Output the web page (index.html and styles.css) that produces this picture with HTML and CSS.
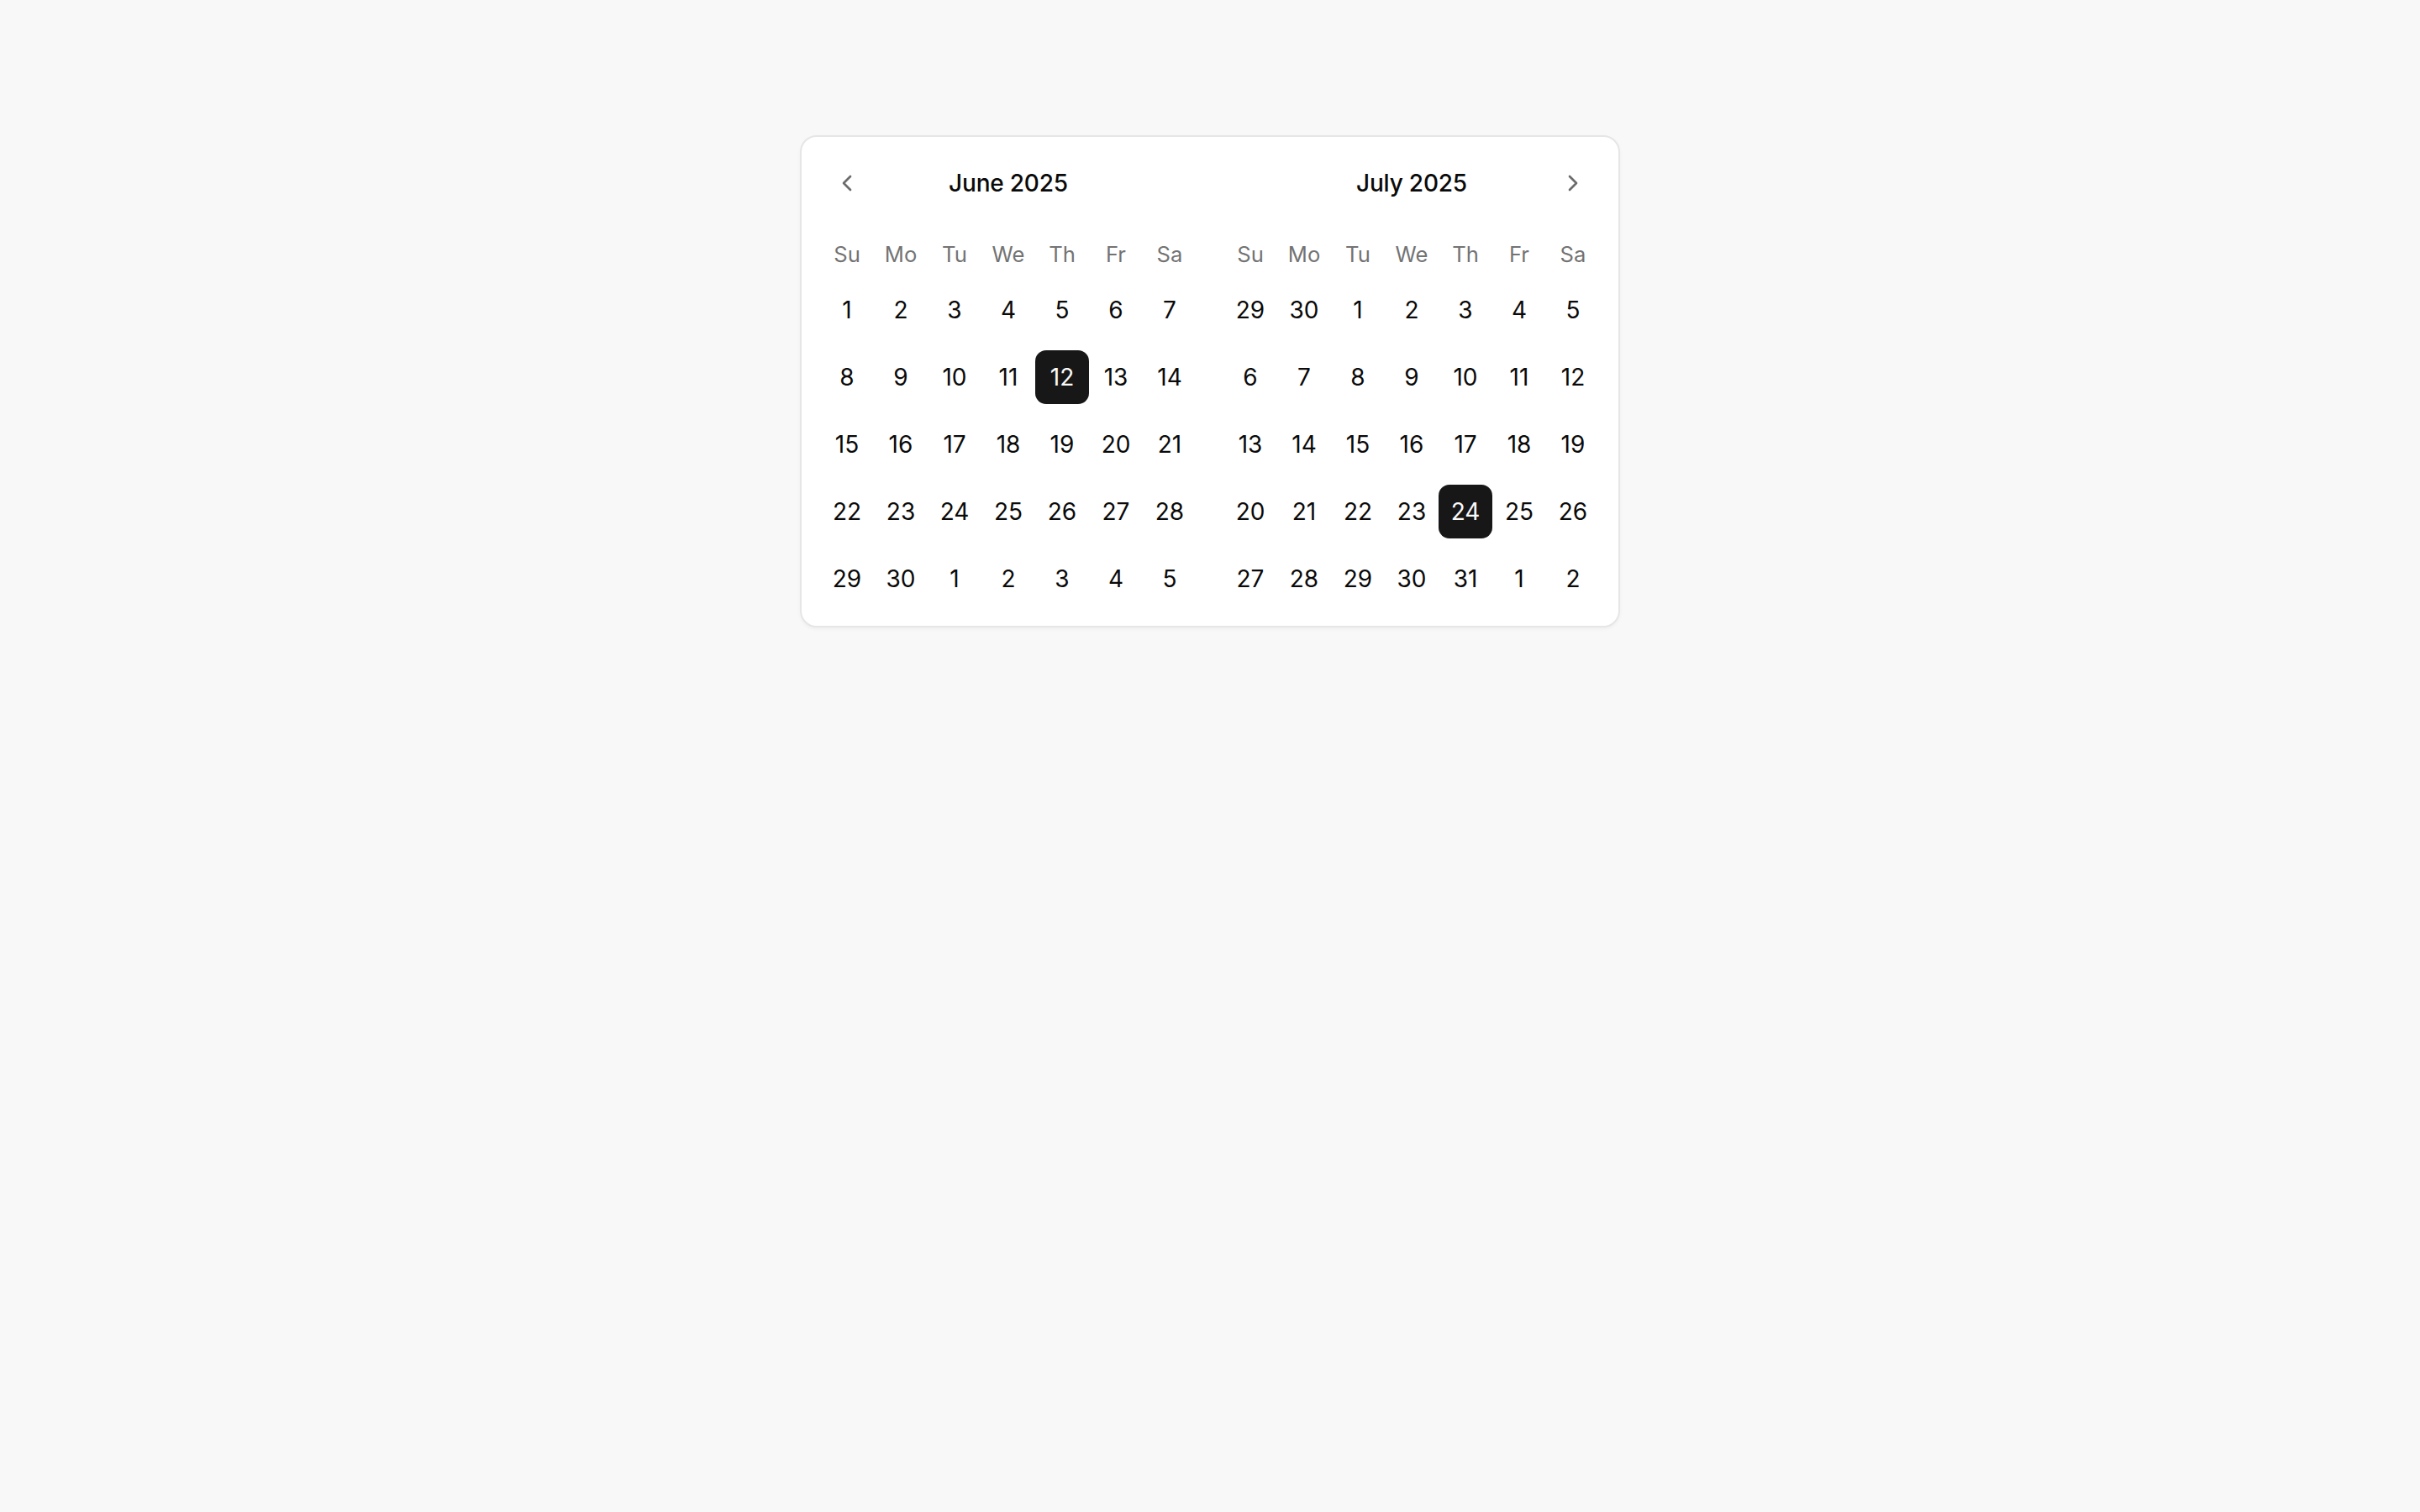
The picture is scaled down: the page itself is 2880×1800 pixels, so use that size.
FILE: index.html
```html
<!DOCTYPE html>
<html lang="en">
<head>
<meta charset="utf-8">
<title>Calendar</title>
<link rel="stylesheet" href="styles.css">
</head>
<body>
<div class="page">
  <div class="calendar">
    <div class="month">
      <div class="caption">
        <button class="nav nav-prev" aria-label="Previous month">
          <svg viewBox="0 0 24 24" width="32" height="32" fill="none" stroke="currentColor" stroke-width="2" stroke-linecap="round" stroke-linejoin="round"><path d="m15 18-6-6 6-6"/></svg>
        </button>
        <div class="title">June 2025</div>
        <span class="nav-spacer"></span>
      </div>
      <div class="weekdays"><span>Su</span><span>Mo</span><span>Tu</span><span>We</span><span>Th</span><span>Fr</span><span>Sa</span></div>
      <div class="week"><span class="day">1</span><span class="day">2</span><span class="day">3</span><span class="day">4</span><span class="day">5</span><span class="day">6</span><span class="day">7</span></div>
      <div class="week"><span class="day">8</span><span class="day">9</span><span class="day">10</span><span class="day">11</span><span class="day selected">12</span><span class="day">13</span><span class="day">14</span></div>
      <div class="week"><span class="day">15</span><span class="day">16</span><span class="day">17</span><span class="day">18</span><span class="day">19</span><span class="day">20</span><span class="day">21</span></div>
      <div class="week"><span class="day">22</span><span class="day">23</span><span class="day">24</span><span class="day">25</span><span class="day">26</span><span class="day">27</span><span class="day">28</span></div>
      <div class="week"><span class="day">29</span><span class="day">30</span><span class="day outside">1</span><span class="day outside">2</span><span class="day outside">3</span><span class="day outside">4</span><span class="day outside">5</span></div>
    </div>
    <div class="month">
      <div class="caption">
        <span class="nav-spacer"></span>
        <div class="title">July 2025</div>
        <button class="nav nav-next" aria-label="Next month">
          <svg viewBox="0 0 24 24" width="32" height="32" fill="none" stroke="currentColor" stroke-width="2" stroke-linecap="round" stroke-linejoin="round"><path d="m9 18 6-6-6-6"/></svg>
        </button>
      </div>
      <div class="weekdays"><span>Su</span><span>Mo</span><span>Tu</span><span>We</span><span>Th</span><span>Fr</span><span>Sa</span></div>
      <div class="week"><span class="day outside">29</span><span class="day outside">30</span><span class="day">1</span><span class="day">2</span><span class="day">3</span><span class="day">4</span><span class="day">5</span></div>
      <div class="week"><span class="day">6</span><span class="day">7</span><span class="day">8</span><span class="day">9</span><span class="day">10</span><span class="day">11</span><span class="day">12</span></div>
      <div class="week"><span class="day">13</span><span class="day">14</span><span class="day">15</span><span class="day">16</span><span class="day">17</span><span class="day">18</span><span class="day">19</span></div>
      <div class="week"><span class="day">20</span><span class="day">21</span><span class="day">22</span><span class="day">23</span><span class="day selected">24</span><span class="day">25</span><span class="day">26</span></div>
      <div class="week"><span class="day">27</span><span class="day">28</span><span class="day">29</span><span class="day">30</span><span class="day">31</span><span class="day outside">1</span><span class="day outside">2</span></div>
    </div>
  </div>
</div>
</body>
</html>
```
FILE: styles.css
```css
* { box-sizing: border-box; }
html, body {
  margin: 0;
  padding: 0;
  background: #f8f8f8;
  font-family: Inter, "Liberation Sans", sans-serif;
  color: #0a0a0a;
}
.page {
  min-height: 1800px;
  display: flex;
  justify-content: center;
  align-items: flex-start;
  padding-top: 161px;
}
.calendar {
  display: flex;
  gap: 32px;
  padding: 23px 22px 24px;
  background: #ffffff;
  border: 2px solid #e6e6e6;
  border-radius: 20px;
  box-shadow: 0 2px 4px rgba(0,0,0,0.04);
}
.month {
  display: flex;
  flex-direction: column;
  width: 448px;
}
.caption {
  display: flex;
  align-items: center;
  justify-content: space-between;
  height: 64px;
  margin-bottom: 33px;
}
.nav, .nav-spacer {
  width: 64px;
  height: 64px;
  flex: none;
}
.nav {
  display: flex;
  align-items: center;
  justify-content: center;
  padding: 0;
  border: 0;
  background: transparent;
  color: #6b6b6b;
  border-radius: 12px;
}
.title {
  font-size: 28px;
  font-weight: 500;
  letter-spacing: -0.2px;
}
.weekdays {
  display: grid;
  grid-template-columns: repeat(7, 64px);
  height: 38px;
  align-items: center;
  font-size: 25.6px;
  color: #737373;
  text-align: center;
}
.week {
  display: grid;
  grid-template-columns: repeat(7, 64px);
  margin-top: 16px;
}
.week:first-of-type { margin-top: 17px; }
.day {
  height: 64px;
  display: flex;
  align-items: center;
  justify-content: center;
  font-size: 28px;
  border-radius: 13px;
}
.day.selected {
  background: #171717;
  color: #fafafa;
}
```
